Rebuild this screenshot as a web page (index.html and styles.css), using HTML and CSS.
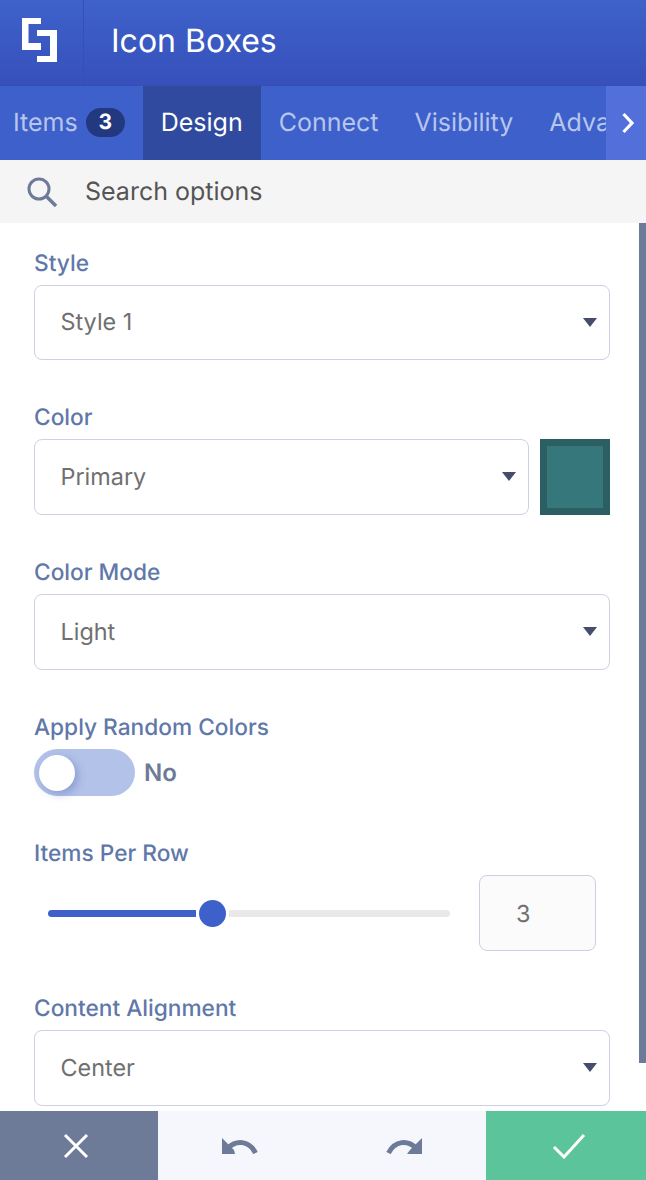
FILE: index.html
```html
<!DOCTYPE html>
<html lang="en">

<head>
    <meta charset="UTF-8">
    <title>Icon Boxes</title>
    <link rel="stylesheet" href="styles.css">
</head>

<body>
    <div class="panel">
        <div class="header">
            <div class="logo">
                <svg width="35" height="44" viewBox="0 0 35 44">
                    <path fill="#fff" d="M0 0H19V6H6.500V25H19V32H0Z M15 12H35V44H15V38H28V18H15Z"/>
                </svg>
            </div>
            <div class="title">Icon Boxes</div>
        </div>

        <div class="tabs">
            <div class="tab tab-first">Items <span class="badge">3</span></div>
            <div class="tab current">Design</div>
            <div class="tab">Connect</div>
            <div class="tab">Visibility</div>
            <div class="tab">Advanced</div>
            <div class="tab-next">
                <svg width="14" height="22" viewBox="0 0 14 22">
                    <path fill="none" stroke="#fff" stroke-width="3.2" d="M2.500 2L11 11L2.500 20"/>
                </svg>
            </div>
        </div>

        <div class="search">
            <svg width="32" height="32" viewBox="0 0 32 32">
                <circle cx="13" cy="13" r="10" fill="none" stroke="#6d7b99" stroke-width="3"/>
                <path stroke="#6d7b99" stroke-width="3.500" d="M20 20L30 30"/>
            </svg>
            <span>Search options</span>
        </div>

        <div class="body">
            <div class="fields">
                <div class="field">
                    <div class="label">Style</div>
                    <div class="select">Style 1<i class="caret"></i></div>
                </div>
                <div class="field">
                    <div class="label">Color</div>
                    <div class="color-row">
                        <div class="select">Primary<i class="caret"></i></div>
                        <div class="swatch"></div>
                    </div>
                </div>
                <div class="field">
                    <div class="label">Color Mode</div>
                    <div class="select">Light<i class="caret"></i></div>
                </div>
                <div class="field field-toggle">
                    <div class="label">Apply Random Colors</div>
                    <div class="toggle-row">
                        <div class="toggle"><span class="knob"></span></div>
                        <span class="toggle-text">No</span>
                    </div>
                </div>
                <div class="field field-range">
                    <div class="label">Items Per Row</div>
                    <div class="range-row">
                        <div class="range">
                            <div class="range-done"></div>
                            <div class="range-thumb"></div>
                            <div class="range-rest"></div>
                        </div>
                        <div class="number">3</div>
                    </div>
                </div>
                <div class="field">
                    <div class="label">Content Alignment</div>
                    <div class="select">Center<i class="caret"></i></div>
                </div>
            </div>
            <div class="scrollbar"><div class="scroll-thumb"></div></div>
        </div>

        <div class="footer">
            <div class="btn btn-cancel">
                <svg width="26" height="26" viewBox="0 0 26 26">
                    <path fill="none" stroke="#fff" stroke-width="3" d="M2 2L24 24M24 2L2 24"/>
                </svg>
            </div>
            <div class="btn btn-history">
                <svg width="36" height="16" viewBox="0 0 36 16">
                    <path fill="#6d7b99" d="M0 0L12 12L13 16H0Z"/>
                    <path fill="none" stroke="#6d7b99" stroke-width="5" d="M6 10C14 2 27 2 33.500 15"/>
                </svg>
            </div>
            <div class="btn btn-history">
                <svg width="36" height="16" viewBox="0 0 36 16">
                    <path fill="#6d7b99" d="M36 0L24 12L21 16H36Z"/>
                    <path fill="none" stroke="#6d7b99" stroke-width="5" d="M30 10C22 2 9 2 2.500 15"/>
                </svg>
            </div>
            <div class="btn btn-save">
                <svg width="34" height="26" viewBox="0 0 34 26">
                    <path fill="none" stroke="#fff" stroke-width="3" d="M2 14L12 24L32 2"/>
                </svg>
            </div>
        </div>
    </div>
</body>

</html>
```

FILE: styles.css
```css
* {
    box-sizing: border-box;
}

body {
    margin: 0;
    font-family: Inter, "Liberation Sans", sans-serif;
    text-rendering: geometricPrecision;
    background-color: #fff;
}

.panel {
    width: 646px;
    height: 1180px;
    display: flex;
    flex-direction: column;
    overflow: hidden;
}

/* header */
.header {
    height: 86px;
    flex: none;
    display: flex;
    background: linear-gradient(#3e62ca, #3750bb);
    border-bottom: 1px solid #3350b0;
}

.logo {
    width: 84px;
    display: flex;
    align-items: center;
    justify-content: center;
    padding: 0 5px 5px 0;
    border-right: 1px solid #3450b2;
}

.title {
    padding-left: 27px;
    font-size: 32px;
    line-height: 82px;
    color: #fff;
}

/* tabs */
.tabs {
    height: 74px;
    flex: none;
    display: flex;
    position: relative;
    overflow: hidden;
    background-color: #3e60ca;
}

.tab {
    flex: none;
    padding: 0.5px 18px 0;
    display: flex;
    align-items: center;
    font-size: 25px;
    color: #b7c6ec;
    white-space: pre;
}

.tab-first {
    padding-left: 13px;
}

.tab.current {
    background-color: #2f4a9e;
    color: #fff;
}

.badge {
    width: 39px;
    height: 29px;
    margin: -2px 0 0 1px;
    border-radius: 15px;
    background-color: #23397f;
    color: #fff;
    font-size: 21px;
    font-weight: 700;
    line-height: 29px;
    text-align: center;
}

.tab-next {
    position: absolute;
    right: 0;
    top: 0;
    width: 40px;
    height: 74px;
    padding-left: 4px;
    display: flex;
    align-items: center;
    justify-content: center;
    background-color: #536fd9;
}

/* search */
.search {
    height: 63px;
    flex: none;
    display: flex;
    align-items: center;
    gap: 27px;
    padding-left: 26px;
    background-color: #f5f5f5;
    font-size: 25px;
    color: #555;
}

/* form */
.body {
    flex: 1;
    min-height: 0;
    display: flex;
}

.fields {
    flex: 1;
    min-width: 0;
    padding: 26.600px 29px 0 34px;
    overflow: hidden;
}

.field {
    height: 154.7px;
}

.field-toggle {
    height: 126.7px;
}

.label {
    height: 35px;
    font-size: 22.700px;
    line-height: 28.500px;
    font-weight: 500;
    color: #5f78a9;
}

.select {
    flex: 1;
    height: 75.7px;
    padding: 0 0 1px 25.500px;
    position: relative;
    display: flex;
    align-items: center;
    background-color: #fff;
    border: 1px solid #cfd0e0;
    border-radius: 8px;
    font-size: 23.400px;
    color: #707070;
}

.caret {
    position: absolute;
    right: 12px;
    top: 32px;
    width: 0;
    height: 0;
    border-left: 7.500px solid transparent;
    border-right: 7.500px solid transparent;
    border-top: 9px solid #444d6b;
}

.color-row {
    display: flex;
    gap: 11px;
}

.swatch {
    width: 70px;
    height: 76px;
    background-color: #36777c;
    border: 7px solid #2c5f63;
}

.toggle-row {
    display: flex;
    align-items: center;
    gap: 9px;
}

.toggle {
    width: 101px;
    height: 47px;
    padding: 6px 5px;
    border-radius: 24px;
    background-color: #b3c2e8;
}

.knob {
    display: block;
    width: 36px;
    height: 36px;
    border-radius: 50%;
    background-color: #fff;
    box-shadow: 3px 3px 8px rgba(60, 90, 170, 0.35);
}

.toggle-text {
    font-size: 24px;
    font-weight: 600;
    color: #6d7b99;
}

.range-row {
    display: flex;
    align-items: center;
    height: 76px;
    padding: 0 14px;
}

.range {
    width: 402px;
    display: flex;
    align-items: center;
}

.range-done {
    width: 148px;
    height: 7px;
    border-radius: 4px 0 0 4px;
    background-color: #3e60ca;
}

.range-thumb {
    width: 27px;
    height: 27px;
    margin: 0 3px;
    flex: none;
    border-radius: 50%;
    background-color: #3e60ca;
}

.range-rest {
    flex: 1;
    height: 7px;
    border-radius: 0 4px 4px 0;
    background-color: #e9e9e9;
}

.number {
    width: 117px;
    height: 76px;
    margin-left: 29px;
    padding-left: 36px;
    display: flex;
    align-items: center;
    background-color: #fbfbfb;
    border: 1px solid #cfcde0;
    border-radius: 8px;
    font-size: 23.400px;
    color: #707070;
}

/* scrollbar */
.scrollbar {
    width: 7px;
    flex: none;
}

.scroll-thumb {
    height: 840px;
    background-color: #6d7b99;
}

/* footer */
.footer {
    height: 69px;
    flex: none;
    display: flex;
}

.btn {
    display: flex;
    align-items: center;
    justify-content: center;
}

.btn-cancel {
    width: 158px;
    padding-right: 6px;
    background-color: #6d7b99;
}

.btn-history {
    width: 164px;
    background-color: #f5f7fc;
}

.btn-save {
    width: 160px;
    padding-left: 5px;
    background-color: #5cc49a;
}
```
